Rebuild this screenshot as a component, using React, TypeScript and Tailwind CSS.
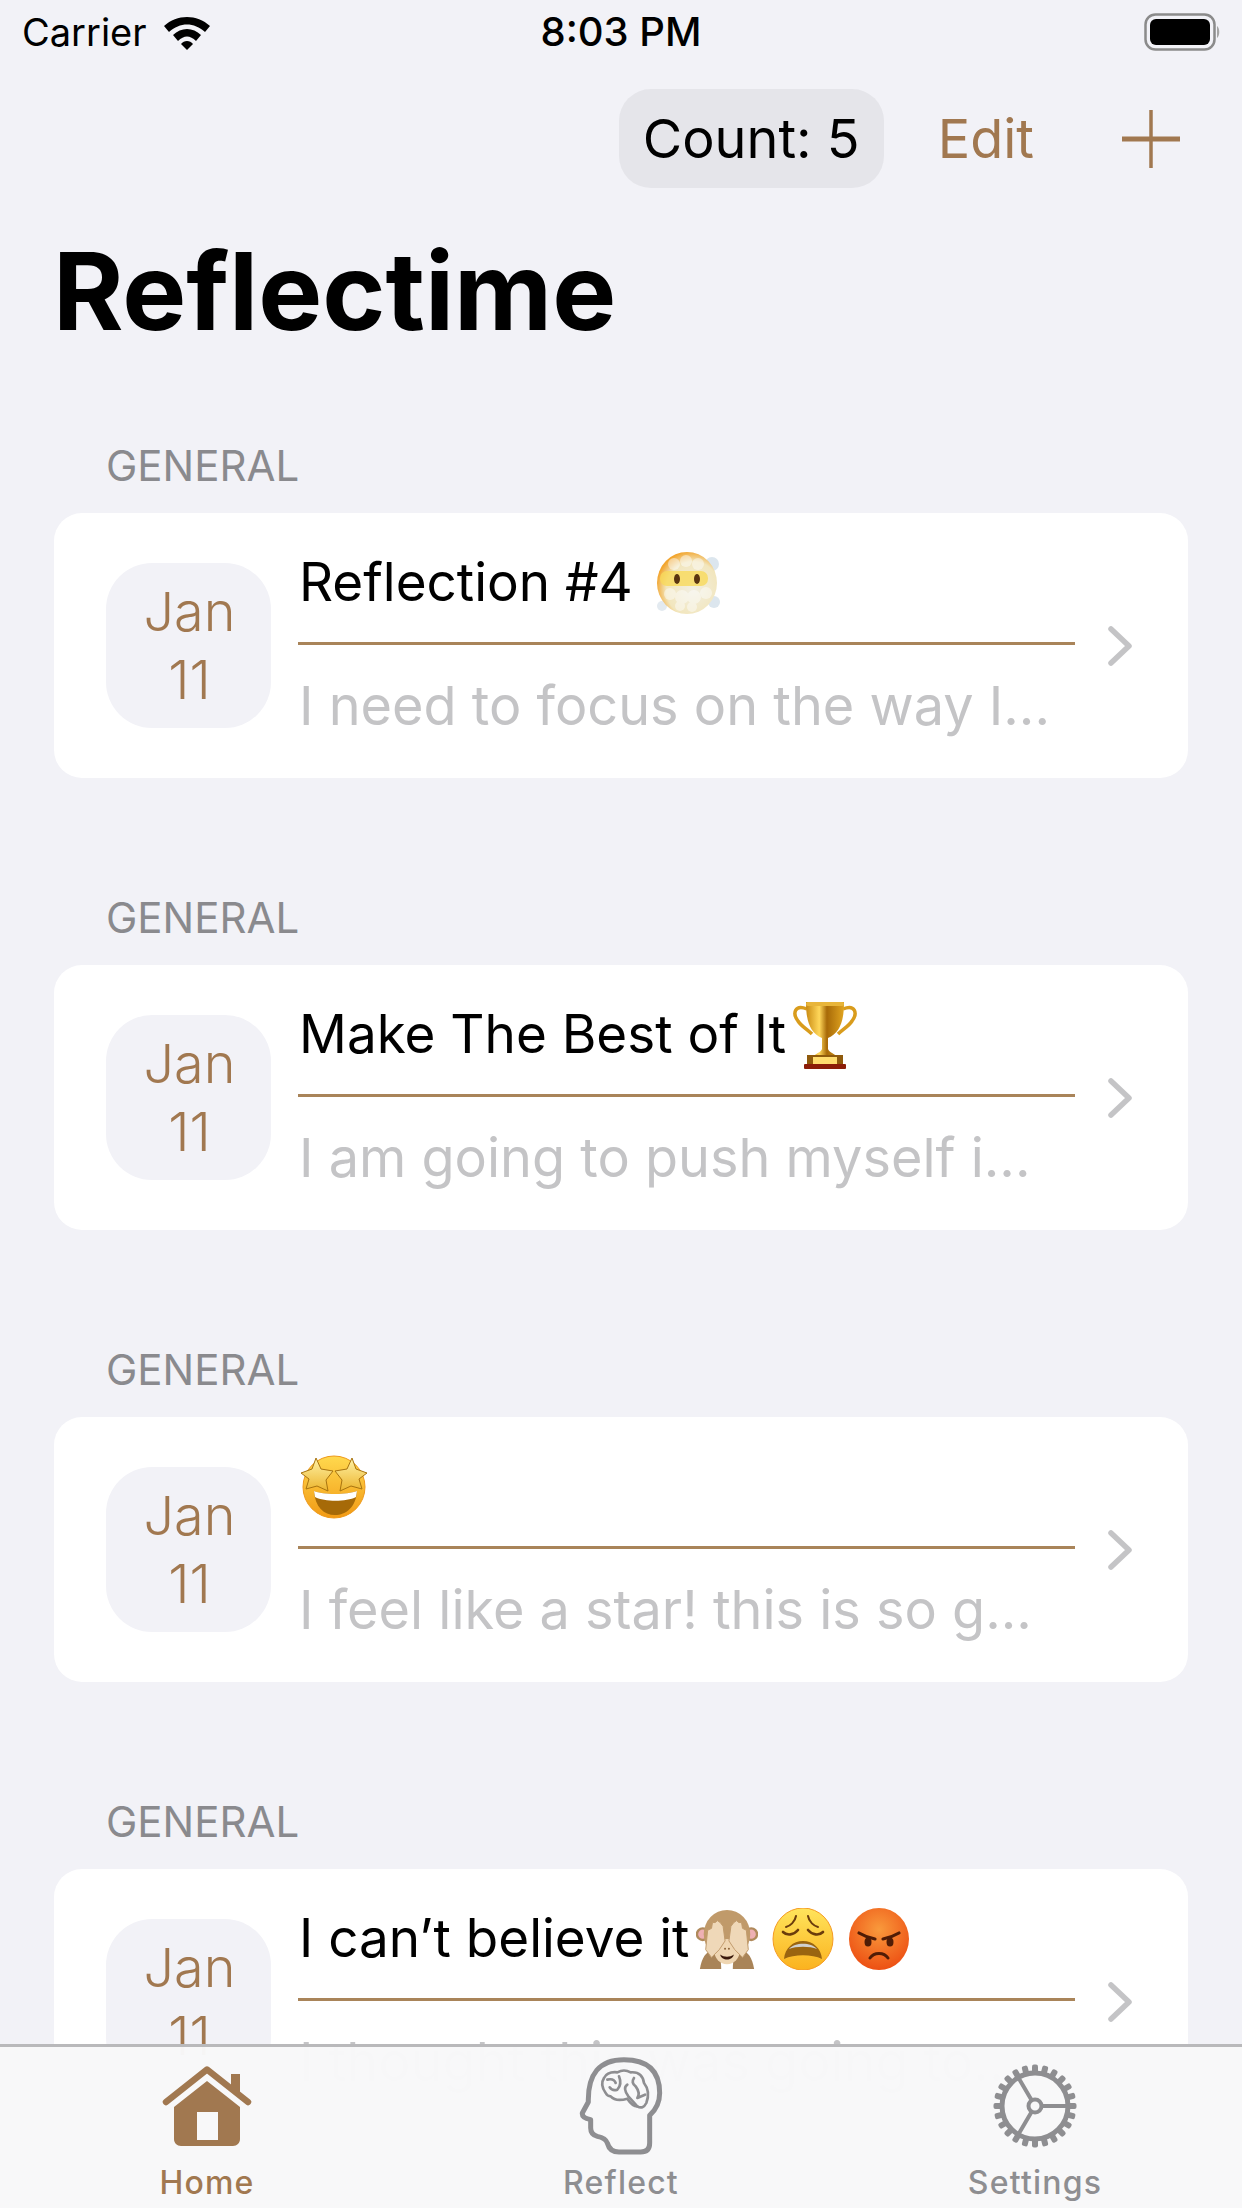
import React from "react";

const BROWN = "#a17850";

const Wifi = () => (
  <svg width="50" height="36" viewBox="0 0 50 36" fill="none">
    <path d="M2 12 C15 0 35 0 48 12 L43 18 C32 8 18 8 7 18 Z" fill="#000" />
    <path d="M11 21 C19 13 31 13 39 21 L34 27 C28 21 22 21 16 27 Z" fill="#000" />
    <path d="M19 30 C22 26 28 26 31 30 L25 36 Z" fill="#000" />
  </svg>
);

const Battery = () => (
  <svg width="76" height="38" viewBox="0 0 76 38" fill="none">
    <rect x="1.5" y="1.5" width="69" height="35" rx="10" stroke="#8b8b8b" strokeWidth="2.5" />
    <rect x="6" y="6" width="60" height="26" rx="6" fill="#000" />
    <path d="M73 13 C76 15 76 23 73 25 Z" fill="#a5a5a5" />
  </svg>
);

const Chevron = () => (
  <svg width="28" height="42" viewBox="0 0 28 42" fill="none">
    <path d="M5 4 L23 21 L5 38" stroke="#c4c4c6" strokeWidth="5.5" strokeLinecap="round" strokeLinejoin="round" />
  </svg>
);

const CloudFace = () => (
  <svg width="64" height="62" viewBox="0 0 64 62" className="shrink-0">
    <defs>
      <radialGradient id="cf" cx="60%" cy="60%" r="62%">
        <stop offset="0%" stopColor="#f2efe2" />
        <stop offset="72%" stopColor="#f2e6bd" />
        <stop offset="100%" stopColor="#f2a52e" />
      </radialGradient>
    </defs>
    <circle cx="56" cy="12" r="7" fill="#dce6ee" />
    <circle cx="58" cy="50" r="6" fill="#dce6ee" />
    <circle cx="6" cy="54" r="5" fill="#e3eaf0" />
    <ellipse cx="31" cy="31" rx="30" ry="31" fill="url(#cf)" />
    <rect x="4" y="19" width="48" height="15" rx="7" fill="#f8d95a" opacity="0.8" />
    <g fill="#fff" opacity="0.45">
      <circle cx="18" cy="12" r="6" />
      <circle cx="30" cy="9" r="6" />
      <circle cx="42" cy="12" r="6" />
      <circle cx="14" cy="42" r="6" />
      <circle cx="26" cy="45" r="7" />
      <circle cx="38" cy="45" r="7" />
      <circle cx="50" cy="41" r="6" />
      <circle cx="24" cy="54" r="5" />
      <circle cx="36" cy="55" r="5" />
    </g>
    <ellipse cx="21" cy="27" rx="3" ry="5" fill="#5a3510" />
    <ellipse cx="41" cy="27" rx="3" ry="5" fill="#5a3510" />
  </svg>
);

const Trophy = () => (
  <svg width="64" height="68" viewBox="0 0 64 68" className="shrink-0">
    <defs>
      <linearGradient id="tr" x1="0" y1="0" x2="1" y2="0">
        <stop offset="0%" stopColor="#c98a12" />
        <stop offset="35%" stopColor="#ffd75a" />
        <stop offset="55%" stopColor="#a86a08" />
        <stop offset="100%" stopColor="#e0a420" />
      </linearGradient>
    </defs>
    <path d="M14 8 C2 3 -1 12 5 20 C8 25 14 28 19 33" fill="none" stroke="#d99c1c" strokeWidth="3.5" />
    <path d="M50 8 C62 3 65 12 59 20 C56 25 50 28 45 33" fill="none" stroke="#d99c1c" strokeWidth="3.5" />
    <path d="M13 1 H51 C51 20 47 32 35 37 V48 C36 51 40 52 42 54 H22 C24 52 28 51 29 48 V37 C17 32 13 20 13 1 Z" fill="url(#tr)" />
    <rect x="13" y="1" width="38" height="4" rx="2" fill="#e8b53a" />
    <rect x="14" y="54" width="36" height="10" fill="#8f5a0c" />
    <rect x="20" y="56" width="24" height="7" fill="#ffdc6e" />
    <rect x="11" y="63" width="42" height="5" rx="1" fill="#8c1d08" />
  </svg>
);

const StarFace = () => (
  <svg width="70" height="64" viewBox="0 0 70 64" className="shrink-0">
    <defs>
      <linearGradient id="sf" x1="0" y1="0" x2="0" y2="1">
        <stop offset="0%" stopColor="#ffd94e" />
        <stop offset="100%" stopColor="#f29a14" />
      </linearGradient>
      <linearGradient id="ss" x1="0" y1="0" x2="0" y2="1">
        <stop offset="0%" stopColor="#fff2a6" />
        <stop offset="100%" stopColor="#ecb52e" />
      </linearGradient>
    </defs>
    <circle cx="35" cy="32" r="31" fill="url(#sf)" stroke="#ee9a1c" strokeWidth="1" />
    <path d="M15 36 C24 40 48 40 58 36 C57 52 47 60 36 60 C25 60 16 52 15 36 Z" fill="#a66a08" />
    <path d="M15 36 C24 40 48 40 58 36 L57 42 C47 47 26 47 16 42 Z" fill="#fff" />
    <path d="M17 3 L22 14 L34 16 L27 25 L29 36 L18 31 L7 34 L10 24 L2 18 L13 14 Z" fill="url(#ss)" stroke="#a8730f" strokeWidth="1" />
    <path d="M53 3 L48 14 L36 16 L43 25 L41 36 L52 31 L63 34 L60 24 L68 18 L57 14 Z" fill="url(#ss)" stroke="#a8730f" strokeWidth="1" />
  </svg>
);

const Monkey = () => (
  <svg width="62" height="62" viewBox="0 0 64 62" className="shrink-0">
    <circle cx="7" cy="26" r="6" fill="#eeb0b4" stroke="#b08a5c" strokeWidth="2.5" />
    <circle cx="57" cy="26" r="6" fill="#eeb0b4" stroke="#b08a5c" strokeWidth="2.5" />
    <ellipse cx="32" cy="26" rx="24" ry="25" fill="#c09a6a" />
    <path d="M4 62 C6 50 10 44 18 42 C24 44 26 52 26 62 Z" fill="#a98458" />
    <path d="M60 62 C58 50 54 44 46 42 C40 44 38 52 38 62 Z" fill="#a98458" />
    <ellipse cx="32" cy="44" rx="13" ry="13" fill="#efd6b2" />
    <path d="M25 47 C29 50 35 50 39 47 C38 54 26 54 25 47 Z" fill="#3a1a0c" />
    <circle cx="30" cy="41" r="1" fill="#8a6238" />
    <circle cx="34" cy="41" r="1" fill="#8a6238" />
    <path d="M10 42 L12 22 L16 20 L17 14 L20 14 L22 12 L25 14 L28 18 L30 33 L24 42 L16 50 Z" fill="#efd8b8" stroke="#c09a6a" strokeWidth="1" />
    <path d="M54 42 L52 22 L48 20 L47 14 L44 14 L42 12 L39 14 L36 18 L34 33 L40 42 L48 50 Z" fill="#efd8b8" stroke="#c09a6a" strokeWidth="1" />
  </svg>
);

const WearyFace = () => (
  <svg width="62" height="62" viewBox="0 0 62 62" className="shrink-0">
    <defs>
      <linearGradient id="wf" x1="0" y1="0" x2="0" y2="1">
        <stop offset="0%" stopColor="#ffe45c" />
        <stop offset="100%" stopColor="#fbb21e" />
      </linearGradient>
    </defs>
    <ellipse cx="31" cy="31" rx="30" ry="31" fill="url(#wf)" stroke="#f59b23" strokeWidth="1" />
    <path d="M24 8 C23 14 18 18 14 19" stroke="#6b3c0c" strokeWidth="2" fill="none" strokeLinecap="round" />
    <path d="M36 8 C37 14 42 18 46 19" stroke="#6b3c0c" strokeWidth="2" fill="none" strokeLinecap="round" />
    <path d="M26 22 C22 27 15 28 11 24" stroke="#6b3c0c" strokeWidth="2.6" fill="none" strokeLinecap="round" />
    <path d="M36 22 C40 27 47 28 51 24" stroke="#6b3c0c" strokeWidth="2.6" fill="none" strokeLinecap="round" />
    <path d="M12 51 C13 40 21 33 31 33 C41 33 49 40 50 51 C40 46 22 46 12 51 Z" fill="#9a6410" />
    <path d="M17 41 C23 34 39 34 45 41 C38 38 24 38 17 41 Z" fill="#d0d0d0" />
  </svg>
);

const AngryFace = () => (
  <svg width="62" height="62" viewBox="0 0 62 62" className="shrink-0">
    <defs>
      <radialGradient id="af" cx="50%" cy="35%" r="70%">
        <stop offset="0%" stopColor="#f99a3c" />
        <stop offset="100%" stopColor="#ec4a10" />
      </radialGradient>
    </defs>
    <ellipse cx="31" cy="31" rx="30" ry="31" fill="url(#af)" />
    <path d="M11 25 C16 28 22 30 27 31" stroke="#4f1c06" strokeWidth="3.2" fill="none" strokeLinecap="round" />
    <path d="M51 25 C46 28 40 30 35 31" stroke="#4f1c06" strokeWidth="3.2" fill="none" strokeLinecap="round" />
    <ellipse cx="20" cy="34" rx="3.5" ry="4.5" fill="#4f1c06" />
    <ellipse cx="42" cy="34" rx="3.5" ry="4.5" fill="#4f1c06" />
    <path d="M22 50 C26 44 36 44 40 50" stroke="#4f1c06" strokeWidth="3" fill="none" strokeLinecap="round" />
  </svg>
);

const HomeIcon = () => (
  <svg width="90" height="80" viewBox="0 0 90 80" fill={BROWN}>
    <path d="M4 36 L45 3.5 L86 36" fill="none" stroke={BROWN} strokeWidth="6.5" strokeLinecap="round" strokeLinejoin="round" />
    <rect x="69" y="8" width="9" height="18" />
    <path
      fillRule="evenodd"
      d="M45 15 L78 41 V73 C78 77 75 80 71 80 H19 C15 80 12 77 12 73 V41 Z M35 46 V74 H56 V46 Z"
    />
  </svg>
);

const BrainIcon = () => (
  <svg width="85" height="100" viewBox="170 84 255 300" fill="none" stroke="#8e8e91" strokeLinecap="round" strokeLinejoin="round">
    <path strokeWidth="15" d="M382 262 V345 Q382 372 355 372 H290 Q262 372 255 345 Q250 330 225 325 Q205 320 205 300 V275 Q178 270 180 255 L198 222 Q195 95 305 95 Q412 95 412 195 Q412 235 382 262 Z" />
    <path strokeWidth="8" d="M250 195 Q232 170 245 150 Q255 130 285 133 Q305 122 325 133 Q360 130 365 165 Q385 190 372 225 Q362 245 345 235 Q330 235 315 212 Q280 222 265 205 Q255 205 250 195 Z" />
    <path strokeWidth="8" d="M255 155 Q275 150 280 165 M290 145 Q300 170 285 185 Q270 190 262 178 M315 170 Q300 180 318 205 L345 235 M335 150 Q325 165 340 175 Q355 195 345 210 L368 200" />
  </svg>
);

const teeth = Array.from({ length: 24 }, (_, i) => i * 15);

const GearIcon = () => (
  <svg width="86" height="84" viewBox="0 0 86 84" fill="none" stroke="#8e8e91">
    <circle cx="43" cy="42" r="33" strokeWidth="5" />
    {teeth.map((deg) => (
      <rect key={deg} x="40" y="0.5" width="6" height="9" rx="2" fill="#8e8e91" stroke="none" transform={`rotate(${deg} 43 42)`} />
    ))}
    <circle cx="43" cy="42" r="6.5" strokeWidth="4" />
    <path strokeWidth="4" d="M50 42 H76 M39.5 36 L26 13 M39.5 48 L26 71" />
  </svg>
);

type Row = { title: string; emoji?: React.ReactNode; preview: string };

const rows: Row[] = [
  {
    title: "Reflection #4",
    emoji: <span className="ml-[23px] flex"><CloudFace /></span>,
    preview: "I need to focus on the way I...",
  },
  {
    title: "Make The Best of It",
    emoji: <span className="ml-[7px] flex"><Trophy /></span>,
    preview: "I am going to push myself i...",
  },
  {
    title: "",
    emoji: <StarFace />,
    preview: "I feel like a star! this is so g...",
  },
  {
    title: "I can\u2019t believe it",
    emoji: (
      <span className="ml-[7px] flex gap-[14px]">
        <Monkey />
        <WearyFace />
        <AngryFace />
      </span>
    ),
    preview: "I thought this was going to...",
  },
];

const ReflectionCard = ({ row }: { row: Row }) => (
  <section className="h-[452px]">
    <h2 className="pl-[106px] h-[47px] text-[42px] leading-[47px] text-[#8a8a8e]">GENERAL</h2>
    <div className="mx-[54px] h-[265px] mt-[24px] bg-white rounded-[28px] flex items-center pl-[52px] pr-[54px]">
      <div className="w-[165px] h-[165px] shrink-0 pl-[2px] rounded-[46px] bg-[#f2f2f7] flex flex-col items-center justify-center text-[54px] leading-[68px] font-light" style={{ color: BROWN }}>
        <span>Jan</span>
        <span>11</span>
      </div>
      <div className="w-[777px] ml-[27px] self-start mt-[22px]">
        <div className="h-[110px] pl-[1px] pb-[11px] flex items-center border-b-[3px] border-[#a98459] text-[53px] text-black whitespace-nowrap">
          <span>{row.title}</span>
          {row.emoji}
        </div>
        <p className="pl-[1px] pt-[21px] text-[54px] leading-[80px] text-[#c4c4c6] whitespace-nowrap">{row.preview}</p>
      </div>
      <div className="ml-[31px] mt-[1px] flex">
        <Chevron />
      </div>
    </div>
  </section>
);

const TabItem = ({ icon, label, active }: { icon: React.ReactNode; label: string; active?: boolean }) => (
  <div className="w-[414px] flex flex-col items-center">
    <div className="h-[118px] flex items-center justify-center">{icon}</div>
    <span className={`text-[32px] leading-[36px] font-medium tracking-[1.2px] ${active ? "text-[#a17850]" : "text-[#8e8e91]"}`}>{label}</span>
  </div>
);

export default function App() {
  return (
    <div className="relative w-[1242px] h-[2208px] overflow-hidden bg-[#f2f2f7] font-['Inter','Liberation_Sans',sans-serif]">
      {/* status bar */}
      <div className="h-[64px] grid grid-cols-3 items-center px-[22px]">
        <div className="flex items-center gap-[15px]">
          <span className="text-[38px] leading-none">Carrier</span>
          <Wifi />
        </div>
        <span className="text-[40px] leading-none font-medium text-center">8:03 PM</span>
        <div className="flex justify-end">
          <Battery />
        </div>
      </div>

      {/* nav */}
      <div className="h-[99px] mt-[25px] flex items-center justify-end pr-[62px]">
        <span className="w-[265px] h-[99px] rounded-[32px] bg-[#e5e5ea] flex items-center justify-center text-[54px] text-black">Count: 5</span>
        <span className="ml-[54px] text-[54px]" style={{ color: BROWN }}>Edit</span>
        <svg className="ml-[88px]" width="58" height="58" viewBox="0 0 58 58">
          <path d="M0 29 H58" stroke={BROWN} strokeWidth="5" />
          <path d="M29 0 V58" stroke={BROWN} strokeWidth="3.5" />
        </svg>
      </div>

      <h1 className="mt-[38px] pl-[53px] h-[130px] text-[107.5px] leading-[130px] font-bold text-black">Reflectime</h1>

      <div className="mt-[86px]">
        {rows.map((row, i) => (
          <ReflectionCard key={i} row={row} />
        ))}
      </div>

      {/* tab bar sits over the list */}
      <nav className="absolute left-0 right-0 bottom-0 h-[164px] bg-[#f8f8f9]/98 border-t-[3px] border-[#b9b9bb] flex">
        <TabItem icon={<HomeIcon />} label="Home" active />
        <TabItem icon={<BrainIcon />} label="Reflect" />
        <TabItem icon={<GearIcon />} label="Settings" />
      </nav>
    </div>
  );
}
